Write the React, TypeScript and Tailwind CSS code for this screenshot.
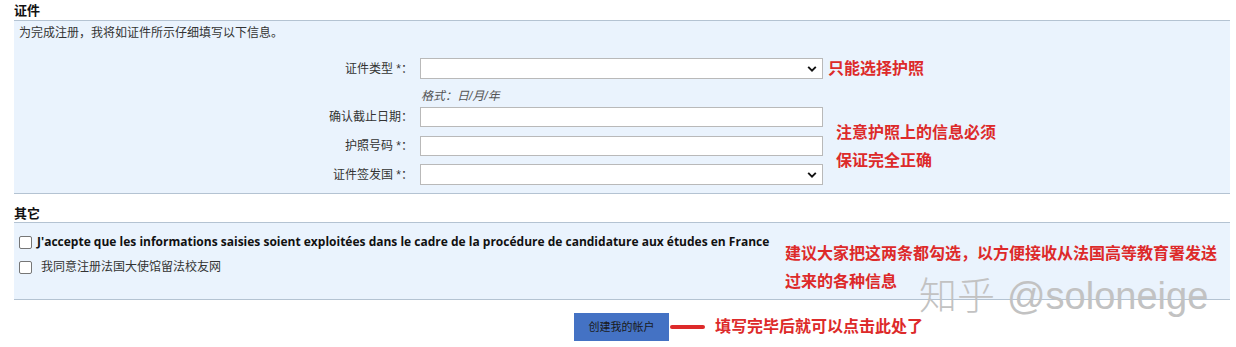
import React from 'react';

const RED = 'text-[#dd2a2a]';

const Chevron = () => (
  <svg className="pointer-events-none absolute right-[6px] top-1/2 -translate-y-1/2" width="10" height="7" viewBox="0 0 10 7">
    <path d="M1.2 1.4 L5 5.2 L8.8 1.4" fill="none" stroke="#111" strokeWidth="1.9" />
  </svg>
);

const SelectBox = ({ h = 'h-[21px]' }: { h?: string }) => (
  <div className={`relative w-[403px] ${h}`}>
    <select className={`w-full ${h} appearance-none border border-[#b9b9b9] bg-white`}>
      <option></option>
    </select>
    <Chevron />
  </div>
);

const TextBox = () => <input type="text" className="w-[403px] h-[20px] border border-[#b9b9b9] bg-white" />;

const Label = ({ children }: { children: React.ReactNode }) => (
  <div className="w-[400px] pr-[1px] text-right text-[12px] leading-[16px] text-[#333]">{children}</div>
);

const Box = () => (
  <input type="checkbox" className="appearance-none w-[13px] h-[13px] rounded-[2px] border border-[#767676] bg-white" />
);

export default function App() {
  return (
    <div className="relative w-[1236px] h-[347px] bg-white pl-[14px] pr-[6px] font-['Liberation_Sans','Noto_Sans_CJK_SC',sans-serif] text-[#222] overflow-hidden">
      {/* 证件 */}
      <div className="h-[20px] pt-[3px] text-[13px] leading-[16px] font-bold text-[#111]">证件</div>
      <div className="h-[174px] border-t border-b border-[#b4c3d2] bg-[#eaf3fd]">
        <div className="pl-[5px] pt-[4px] text-[12px] leading-[16px] text-[#333]">为完成注册，我将如证件所示仔细填写以下信息。</div>

        <div className="mt-[17px] flex h-[21px] items-center">
          <Label>证件类型 *：</Label>
          <div className="ml-[6px]"><SelectBox /></div>
          <div className={`ml-[5px] text-[16px] leading-[20px] font-bold ${RED}`}>只能选择护照</div>
        </div>

        <div className="mt-[10px] h-[14px] pl-[407px] text-[12px] leading-[14px] italic text-[#555]">格式：日/月/年</div>

        <div className="mt-[4px] flex">
          <div className="flex flex-col">
            <div className="flex h-[20px] items-center">
              <Label>确认截止日期：</Label>
              <div className="ml-[6px]"><TextBox /></div>
            </div>
            <div className="mt-[9px] flex h-[20px] items-center">
              <Label>护照号码 *：</Label>
              <div className="ml-[6px]"><TextBox /></div>
            </div>
            <div className="mt-[8px] flex h-[21px] items-center">
              <Label>证件签发国 *：</Label>
              <div className="ml-[6px]"><SelectBox /></div>
            </div>
          </div>
          <div className={`pl-[13px] pt-[12px] text-[16px] leading-[28px] font-bold ${RED}`}>
            <div>注意护照上的信息必须</div>
            <div>保证完全正确</div>
          </div>
        </div>
      </div>

      {/* 其它 */}
      <div className="h-[28px] pt-[12px] text-[13px] leading-[16px] font-bold text-[#111]">其它</div>
      <div className="flex h-[78px] border-t border-b border-[#b4c3d2] bg-[#eaf3fd]">
        <div className="w-[771px] shrink-0 pl-[5px] pt-[11px]">
          <div className="flex h-[16px] items-center">
            <Box />
            <span className="ml-[5px] font-['Open_Sans',sans-serif] text-[12px] font-bold text-[#111] whitespace-nowrap">
              {"J'accepte que les informations saisies soient exploitées dans le cadre de la procédure de candidature aux études en France"}
            </span>
          </div>
          <div className="mt-[9px] flex h-[16px] items-center">
            <Box />
            <span className="ml-[9px] text-[12px] text-[#333]">我同意注册法国大使馆留法校友网</span>
          </div>
        </div>
        <div className={`pt-[17px] text-[16px] leading-[28px] font-bold whitespace-nowrap ${RED}`}>
          <div>建议大家把这两条都勾选，以方便接收从法国高等教育署发送</div>
          <div>过来的各种信息</div>
        </div>
      </div>

      {/* footer */}
      <div className="mt-[13px] flex items-center pl-[560px]">
        <button className="w-[95px] h-[28px] bg-[#4472c4] text-[11px] text-[#1a1a1a]">创建我的帐户</button>
        <div className="ml-[1px] h-[4px] w-[35px] rounded-full bg-[#dd2a2a]" />
        <div className={`ml-[10px] text-[16px] leading-[20px] font-bold ${RED}`}>填写完毕后就可以点击此处了</div>
      </div>

      {/* watermark */}
      <div className="absolute left-[919px] top-[270px] flex items-baseline text-[#c2c2c2] text-[38px] leading-[46px]">
        <span className="font-['Noto_Sans_CJK_SC',sans-serif] font-light">知乎</span>
        <span className="ml-[12px] font-['Liberation_Sans',sans-serif]">@soloneige</span>
      </div>
    </div>
  );
}
